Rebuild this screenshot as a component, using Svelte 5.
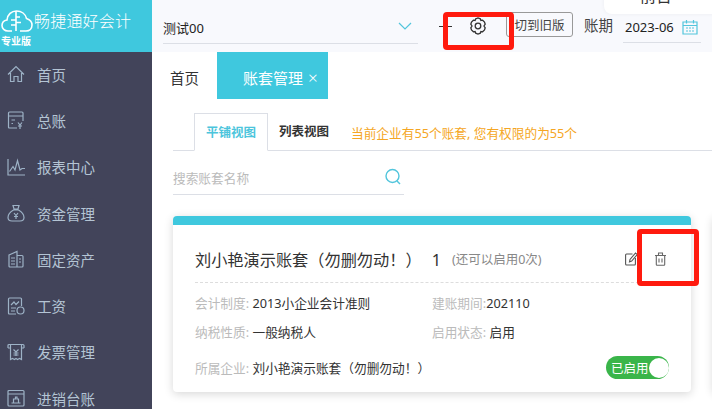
<script>
  const menu = [
    { name: "首页", icon: "home" },
    { name: "总账", icon: "ledger" },
    { name: "报表中心", icon: "chart" },
    { name: "资金管理", icon: "bag" },
    { name: "固定资产", icon: "building" },
    { name: "工资", icon: "salary" },
    { name: "发票管理", icon: "invoice" },
    { name: "进销台账", icon: "stock" },
  ];
</script>

<div class="page">
  <aside class="sidebar">
    <div class="logo">
      <div class="brand">
        <svg width="32" height="22" viewBox="0 0 32 22" fill="none" stroke="#fff" stroke-width="1.6">
          <path d="M11 21H7C3.500 21 1 18.500 1 15.500C1 12.500 3 10.500 6 10C6.500 4.500 10.500 1 15.500 1C20.500 1 24.500 4 25.500 8.500C28.500 9.500 31 12 31 15C31 18.500 28.500 21 25 21H19" />
          <path d="M15 1V21M10 10H15M10 15H15M15 7H19M15 12.500H20" />
        </svg>
        <span class="brand-name">畅捷通好会计</span>
      </div>
      <div class="edition">专业版</div>
    </div>
    <nav>
      {#each menu as item}
        <div class="menu-item">
          <svg width="18" height="18" viewBox="0 0 18 18" fill="none" stroke="#9db2c6" stroke-width="1.2">
            {#if item.icon === "home"}
              <path d="M1 9.500L9 1.500L17 9.500M3.500 8V16.500H7V11.500H11V16.500H14.500V8" />
            {:else if item.icon === "ledger"}
              <path d="M10 17H2.500C1.800 17 1.500 16.600 1.500 16V2C1.500 1.400 1.800 1 2.500 1H15C15.600 1 16 1.400 16 2V10M1.500 5H16M4.500 9H8M4.500 12.500H6" />
              <path d="M11 11.500L13 14L15 11.500M13 14V18M11 15H15" />
            {:else if item.icon === "chart"}
              <path d="M1 1V17H18M2.500 13.500L6 8.500L8 12L10.500 2.500L13 12L15 10.500H18" />
            {:else if item.icon === "bag"}
              <path d="M6 1.500H12L11 5H7ZM6.500 6H11.500C15 8 17 11 17 13.500C17 16 15.500 17 13 17H5C2.500 17 1 16 1 13.500C1 11 3 8 6.500 6Z" />
              <path d="M7 9L9 11.500L11 9M9 11.500V15M7 12.500H11" />
            {:else if item.icon === "building"}
              <path d="M2 5L10 1.500V17H3C2.400 17 2 16.600 2 16ZM10 5.500H15C15.600 5.500 16 6 16 6.500V16C16 16.600 15.600 17 15 17H10M4 8H8M4 11H8M4 14H8M12 9H14M12 12H14" />
            {:else if item.icon === "salary"}
              <path d="M9 17H2.500C1.800 17 1.500 16.600 1.500 16V2C1.500 1.400 1.800 1 2.500 1H13.500C14.200 1 14.500 1.400 14.500 2V9M4 8L7 5L9 7.500L12 4.500M4 11H9M4 14H8" />
              <circle cx="13.500" cy="13.500" r="3.500" />
            {:else if item.icon === "invoice"}
              <path d="M1 5V2.500C1 1.800 1.400 1.500 2 1.500H16C16.600 1.500 17 1.800 17 2.500V5M1 5H3.500M17 5H14.500M3.500 2V16.500L5.500 15.500L7.500 16.500L9 15.500L10.500 16.500L12.500 15.500L14.500 16.500V2" />
              <path d="M6.500 6.500L9 9L11.500 6.500M9 9V13M6.500 10H11.500M6.500 12H11.500" />
            {:else}
              <path d="M2 1.500H16C16.600 1.500 17 1.900 17 2.500V16C17 16.600 16.600 17 16 17H2C1.400 17 1 16.600 1 16V2.500C1 1.900 1.400 1.500 2 1.500ZM1 5H17M4.500 14H13.500M6.500 14V10H8.500V8H10V10H11.500V14" />
            {/if}
          </svg>
          <span>{item.name}</span>
        </div>
      {/each}
    </nav>
  </aside>

  <main>
    <header class="topbar">
      <div class="company">
        <span>测试00</span>
        <svg width="14" height="8" viewBox="0 0 14 8" fill="none" stroke="#52c5dc" stroke-width="1.2"><path d="M1 1L7 7L13 1" /></svg>
      </div>
      <span class="dash"></span>
      <svg class="gear" width="18" height="18" viewBox="0 0 18 18" fill="none" stroke="#333" stroke-width="1.3">
        <path d="M6.700 1.800L9 1L11.300 1.800L11.900 3.500L13.600 3.200L15.500 5L16.200 7.200L15 9L16.200 10.800L15.500 13L13.600 14.800L11.900 14.500L11.300 16.200L9 17L6.700 16.200L6.100 14.500L4.400 14.800L2.500 13L1.800 10.800L3 9L1.800 7.200L2.500 5L4.400 3.200L6.100 3.500Z" />
        <circle cx="9" cy="9" r="2.800" />
      </svg>
      <button class="old-version">切到旧版</button>
      <span class="period-label">账期</span>
      <div class="period">
        <span>2023-06</span>
        <svg width="16" height="16" viewBox="0 0 16 16" fill="none" stroke="#52c5dc" stroke-width="1.200">
          <path d="M1 3H15V15H1ZM1 6.500H15M4.500 1V4.500M11.500 1V4.500M4 9H6M7 9H9M10 9H12M4 12H6M7 12H9M10 12H12" />
        </svg>
      </div>
    </header>

    <div class="page-tabs">
      <span class="home-tab">首页</span>
      <div class="active-tab"><span>账套管理</span><span class="close">×</span></div>
    </div>

    <div class="content">
      <div class="view-tabs">
        <span class="view-tab selected">平铺视图</span>
        <span class="view-tab">列表视图</span>
        <span class="notice">当前企业有55个账套, 您有权限的为55个</span>
      </div>

      <div class="search">
        <span>搜索账套名称</span>
        <svg width="18" height="18" viewBox="0 0 18 18" fill="none" stroke="#52c5dc" stroke-width="1.400">
          <circle cx="8.500" cy="8" r="6.500" /><path d="M13 13L16 16" />
        </svg>
      </div>

      <div class="cards">
        <section class="card">
          <div class="card-bar"></div>
          <div class="card-body">
            <div class="card-head">
              <span class="title">刘小艳演示账套（勿删勿动！）<span class="count">1</span></span>
              <span class="hint">(还可以启用0次)</span>
              <div class="actions">
                <svg width="13" height="14" viewBox="0 0 13 14" fill="none" stroke="#555" stroke-width="1.100">
                  <path d="M7.500 2H1.500C1 2 .6 2.400 .6 3V12C.6 12.600 1 13 1.500 13H9.500C10 13 10.400 12.600 10.400 12V6" />
                  <path d="M4.500 9.800L5 7.500L10.500 1L12.200 2.500L6.700 9Z" />
                </svg>
                <svg width="13" height="14" viewBox="0 0 13 14" fill="none" stroke="#666" stroke-width="1.100">
                  <path d="M1 3.500H12M4.500 3.500V1H8.500V3.500M2.300 3.500V12.500C2.300 13 2.600 13.300 3 13.300H10C10.400 13.300 10.700 13 10.700 12.500V3.500M5 6.500V10.500M8 6.500V10.500" />
                </svg>
              </div>
            </div>
            <div class="info-grid">
              <div><span class="label">会计制度:</span> 2013小企业会计准则</div>
              <div><span class="label">建账期间:</span>202110</div>
              <div><span class="label">纳税性质:</span> 一般纳税人</div>
              <div><span class="label">启用状态:</span> 启用</div>
            </div>
            <div class="card-foot">
              <div><span class="label">所属企业:</span> 刘小艳演示账套（勿删勿动！）</div>
              <div class="toggle"><span>已启用</span><i></i></div>
            </div>
          </div>
        </section>
        <section class="card"></section>
      </div>
    </div>
  </main>

  <div class="popover">前台</div>
  <div class="mark mark-gear"></div>
  <div class="mark mark-trash"></div>
</div>

<style>
  :global(body) {
    margin: 0;
  }

  .page {
    position: relative;
    display: flex;
    width: 712px;
    height: 409px;
    overflow: hidden;
    font-family: "Noto Sans", "Noto Sans CJK SC", sans-serif;
    font-size: 12px;
    color: #333;
    background: #fff;
  }

  .sidebar {
    flex: 0 0 152px;
    background: #42445a;
  }

  .logo {
    height: 52px;
    box-sizing: border-box;
    padding: 10px 0 0 1px;
    background: #3fc8de;
    color: #fff;
  }

  .brand {
    display: flex;
    align-items: center;
    height: 22px;
  }

  .brand-name {
    margin-left: 1px;
    font-size: 16px;
    line-height: 22px;
    letter-spacing: 0.2px;
    font-weight: 300;
  }

  .edition {
    margin-top: 2px;
    font-size: 10px;
    font-weight: 700;
    line-height: 14px;
  }

  nav {
    margin-top: -1px;
  }

  .menu-item {
    display: flex;
    align-items: center;
    height: 46.3px;
    padding-left: 7px;
    gap: 12px;
    color: #b4c4d4;
    font-size: 14.500px;
    white-space: nowrap;
  }

  main {
    flex: 1;
    min-width: 0;
  }

  .topbar {
    display: flex;
    align-items: center;
    height: 52px;
    box-sizing: border-box;
    padding: 0 0 0 11px;
    background: #f8f9fd;
  }

  .company {
    display: flex;
    align-items: center;
    justify-content: space-between;
    width: 255px;
    height: 32px;
    margin-top: 4px;
    padding-right: 6px;
    box-sizing: border-box;
    border-bottom: 1px solid #dcdfe6;
    font-size: 13px;
    color: #222;
  }

  .company svg {
    margin-top: -4px;
  }

  .dash {
    width: 13px;
    height: 1px;
    margin-left: 21px;
    background: #333;
  }

  .gear {
    margin-left: 17px;
    margin-top: -1px;
  }

  .old-version {
    width: 67px;
    height: 25px;
    margin: -3px 0 0 19px;
    padding: 0;
    border: 1px solid #999;
    border-radius: 3px;
    background: transparent;
    font-family: inherit;
    font-size: 12.500px;
    color: #444;
  }

  .period-label {
    margin: -3px 0 0 11px;
    font-size: 14.500px;
    color: #444;
  }

  .period {
    display: flex;
    align-items: center;
    justify-content: space-between;
    width: 78px;
    height: 32px;
    margin: 2px 0 0 10px;
    padding: 0 3px 0 2px;
    box-sizing: border-box;
    border-bottom: 1px solid #dcdfe6;
    font-size: 13px;
    color: #222;
  }

  .page-tabs {
    display: flex;
    height: 47px;
    padding-left: 18px;
  }

  .home-tab {
    width: 47px;
    font-size: 14.500px;
    line-height: 52px;
    color: #333;
  }

  .active-tab {
    display: flex;
    align-items: center;
    width: 111px;
    padding: 3px 0 0 26px;
    box-sizing: border-box;
    background: #3fc8de;
    color: #fff;
    font-size: 15px;
  }

  .close {
    margin-left: 5px;
    font-size: 17px;
    font-weight: 300;
  }

  .content {
    padding: 14px 0 0 21px;
  }

  .view-tabs {
    display: flex;
    align-items: center;
    height: 37px;
    padding-left: 21px;
    border-bottom: 1px solid #dcdfe6;
  }

  .view-tab {
    box-sizing: border-box;
    width: 74px;
    height: 38px;
    line-height: 38px;
    margin-bottom: -1px;
    text-align: center;
    font-weight: 700;
    font-size: 12.500px;
    color: #333;
  }

  .view-tab.selected {
    border: 1px solid #dcdfe6;
    border-bottom-color: #fff;
    color: #4cc5dc;
  }

  .view-tab:nth-child(2) {
    width: 72px;
  }

  .notice {
    margin: 1px 0 0 11px;
    color: #f5a623;
    font-size: 12.700px;
  }

  .search {
    display: flex;
    align-items: center;
    justify-content: space-between;
    width: 231px;
    height: 44px;
    padding: 9px 2px 0 0;
    box-sizing: border-box;
    border-bottom: 1px solid #dcdfe6;
    font-size: 12.700px;
    color: #bbb;
  }

  .cards {
    display: flex;
    gap: 22px;
    margin-top: 21px;
  }

  .card {
    flex: none;
    width: 518px;
    height: 176px;
    border-radius: 4px;
    overflow: hidden;
    background: #fff;
    box-shadow: 0 2px 10px rgba(0, 0, 0, 0.16);
    font-size: 12.700px;
  }

  .card-bar {
    height: 9px;
    background: #3fc8de;
  }

  .card-body {
    padding: 0 22px;
  }

  .card-head {
    display: flex;
    align-items: center;
    height: 58px;
    border-bottom: 1px dashed #ddd;
    padding: 10px 2px 0 0;
    box-sizing: border-box;
  }

  .title {
    font-size: 16.200px;
    color: #333;
  }

  .count {
    margin-left: 10px;
  }

  .hint {
    margin-left: 11px;
    font-size: 12.500px;
    color: #888;
  }

  .actions {
    display: flex;
    gap: 16px;
    margin-left: auto;
  }

  .info-grid {
    display: grid;
    grid-template-columns: 237px 1fr;
    grid-auto-rows: 29px;
    padding-top: 5px;
    align-items: center;
  }

  .label {
    color: #bbb;
  }

  .card-foot {
    display: flex;
    align-items: center;
    justify-content: space-between;
    margin-top: 10px;
  }

  .toggle {
    display: flex;
    align-items: center;
    justify-content: space-between;
    box-sizing: border-box;
    width: 63px;
    height: 23px;
    padding: 0 1px 0 5px;
    border-radius: 12px;
    background: #3ab54a;
    color: #fff;
    font-size: 12.500px;
    white-space: nowrap;
  }

  .toggle i {
    flex: none;
    width: 20px;
    height: 20px;
    border-radius: 50%;
    background: #fff;
  }

  .popover {
    position: absolute;
    top: -14px;
    left: 604px;
    width: 120px;
    height: 28px;
    padding-left: 36px;
    box-sizing: border-box;
    border-radius: 8px;
    background: #fff;
    box-shadow: 0 0 4px rgba(0, 0, 0, 0.05);
    font-size: 16px;
    line-height: 21px;
  }

  .mark {
    position: absolute;
    box-sizing: border-box;
    border: 5px solid #ff1a0e;
    border-radius: 4px;
  }

  .mark-gear {
    left: 443px;
    top: 12px;
    width: 71px;
    height: 38px;
  }

  .mark-trash {
    left: 637px;
    top: 229px;
    width: 62px;
    height: 57px;
  }
</style>
